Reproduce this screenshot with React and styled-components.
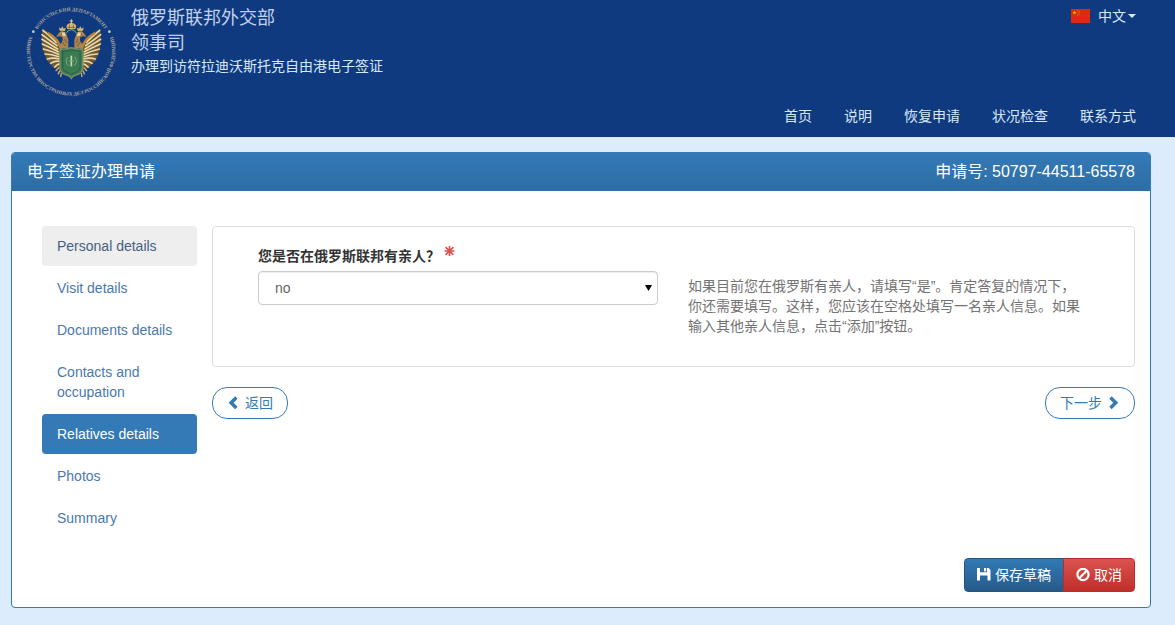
import React from "react";
import styled, { createGlobalStyle, css } from "styled-components";

const GlobalStyle = createGlobalStyle`
  *, *::before, *::after { box-sizing: border-box; }
  body {
    margin: 0;
    background: #dcecfd;
    color: #333;
    font-family: "Liberation Sans", "Noto Sans CJK SC", sans-serif;
    font-size: 14px;
    line-height: 20px;
  }
  button, select { font: inherit; }
`;

/* ---------- header ---------- */

const Header = styled.header`
  display: flex;
  justify-content: space-between;
  min-height: 137px;
  padding: 5px 39px 10px 25px;
  background: #103a7f;
  color: #d8e8fb;
`;

const Brand = styled.div`
  display: flex;
  align-items: flex-start;
  gap: 14px;
`;

const BrandText = styled.div`
  display: flex;
  flex-direction: column;
  padding-top: 1px;
`;

const BrandLine = styled.span`
  font-size: 18px;
  line-height: 25px;
  color: #c0d2ee;
`;

const BrandNote = styled.span`
  line-height: 20px;
`;

const HeaderSide = styled.div`
  display: flex;
  flex-direction: column;
  justify-content: space-between;
  align-items: flex-end;
`;

const LanguageButton = styled.button`
  display: flex;
  align-items: center;
  gap: 2px;
  padding: 0;
  border: 0;
  background: none;
  color: inherit;
  line-height: 22px;
  cursor: pointer;
`;

const FlagIcon = styled.svg`
  margin-right: 6px;
`;

const MainNav = styled.nav`
  display: flex;
  gap: 32px;
`;

const MainLink = styled.a`
  color: inherit;
  line-height: 22px;
  text-decoration: none;
`;

/* ---------- panel ---------- */

const Page = styled.main`
  padding: 15px 24px 17px 11px;
`;

const Panel = styled.section`
  border: 1px solid #337ab7;
  border-radius: 4px;
  background: #fff;
  overflow: hidden;
`;

const PanelHeading = styled.div`
  display: flex;
  justify-content: space-between;
  padding: 9px 15px;
  background: linear-gradient(#337ab7, #2e6da4);
  color: #fff;
  font-size: 16px;
`;

const PanelTitle = styled.h1`
  margin: 0;
  font: inherit;
`;

const PanelBody = styled.div`
  display: flex;
  align-items: flex-start;
  gap: 15px;
  padding: 35px 15px 20px 30px;
`;

const PanelFooter = styled.div`
  display: flex;
  justify-content: flex-end;
  padding: 0 15px 15px;
`;

const Steps = styled.nav`
  display: flex;
  flex: none;
  flex-direction: column;
  gap: 2px;
  width: 155px;
`;

const StepLink = styled.a`
  padding: 10px 15px;
  border-radius: 4px;
  color: #4a78ae;
  text-decoration: none;
  ${(p) => p.$state === "hover" && css`background: #eee; color: #475f80;`}
  ${(p) => p.$state === "active" && css`background: #337ab7; color: #fff;`}
`;

const Content = styled.div`
  flex: 1;
  min-width: 0;
`;

const Question = styled.div`
  display: grid;
  grid-template-columns: 1fr 1fr;
  gap: 30px;
  padding: 19px 46px 30px 45px;
  border: 1px solid #ddd;
  border-radius: 4px;
`;

const FieldLabel = styled.label`
  display: flex;
  gap: 4px;
  margin-bottom: 5px;
  font-weight: 700;
`;

const SelectBox = styled.div`
  position: relative;
`;

const Select = styled.select`
  display: block;
  width: 100%;
  height: 34px;
  padding: 0 16px;
  border: 1px solid #ccc;
  border-radius: 4px;
  background: #fff;
  box-shadow: inset 0 1px 1px rgba(0, 0, 0, 0.075);
  color: #666;
  appearance: none;
`;

const SelectArrow = styled.svg`
  position: absolute;
  top: 14px;
  right: 6px;
  pointer-events: none;
`;

const Help = styled.p`
  margin: 0;
  padding-top: 30px;
  color: #737373;
`;

const Pager = styled.div`
  display: flex;
  justify-content: space-between;
  margin-top: 20px;
`;

const Button = styled.button`
  display: flex;
  align-items: center;
  gap: 4px;
  border: 1px solid;
  cursor: pointer;
`;

const PagerButton = styled(Button)`
  height: 32px;
  padding: 0 14px;
  border-color: #337ab7;
  border-radius: 15px;
  background: #fff;
  color: #337ab7;
`;

const ActionButton = styled(Button)`
  height: 34px;
  padding: 0 12px;
  color: #fff;
  ${(p) =>
    p.$kind === "danger"
      ? css`
          margin-left: -1px;
          border-color: #b92c28;
          border-radius: 0 4px 4px 0;
          background: linear-gradient(#d9534f, #c12e2a);
        `
      : css`
          border-color: #245580;
          border-radius: 4px 0 0 4px;
          background: linear-gradient(#337ab7, #265a88);
        `}
`;

/* ---------- drawings ---------- */

const Icon = ({ children, size = 14 }) => (
  <svg width={size} height={size} viewBox="0 0 14 14" fill="currentColor" aria-hidden="true">
    {children}
  </svg>
);

const ChevronLeft = () => (
  <Icon><path d="M8.1 .3 10.600 2.800 6.600 6.800l4 4-2.500 2.500L1.600 6.800z" /></Icon>
);
const ChevronRight = () => (
  <Icon><path d="M5.700 .3 3.200 2.800 7.200 6.800l-4 4 2.500 2.500L12.200 6.800z" /></Icon>
);
const Floppy = () => (
  <Icon>
    <path d="M0 0h3v4.200h7V0h1.500L13.500 2V12.500h-3V7.500H3v5H0z" />
    <path d="M7 0h2.200v3.400H7z" />
  </Icon>
);
const Ban = () => (
  <Icon>
    <circle cx="7" cy="6.500" r="5.600" fill="none" stroke="currentColor" strokeWidth="2.200" />
    <path d="M3.200 10.300 10.800 2.700" stroke="currentColor" strokeWidth="2.200" />
  </Icon>
);
const Required = () => (
  <svg width="11" height="11" viewBox="-5.500 -5 11 11" stroke="#d9534f" strokeWidth="1.700" role="img" aria-label="required">
    <path d="M0-5V5M-5 0H5M-3.900-3.900 3.900 3.900M3.900-3.900-3.900 3.900" />
  </svg>
);

const Flag = () => (
  <FlagIcon width="19" height="14" viewBox="0 0 19 14" aria-hidden="true">
    <path fill="#de2910" d="M0 0h19v14H0z" />
    <path fill="#ffb400" d="m3.500 1.500.6 1.500h1.600L4.400 4l.5 1.600-1.400-1-1.400 1L2.600 4 1.300 3h1.600z" />
    <g fill="#f0891a">
      <circle cx="6.800" cy="1.500" r=".6" />
      <circle cx="8.200" cy="2.900" r=".6" />
      <circle cx="8.200" cy="4.800" r=".6" />
      <circle cx="6.800" cy="6.200" r=".6" />
    </g>
  </FlagIcon>
);

const EagleHalf = () => (
  <g>
    <path fill="#6d5836" d="M82 86 80 118 84 150 96 180 118 204 136 206 142 140 128 116 106 98z" />
    <g stroke="#ecd9a8" strokeWidth="5" strokeLinecap="round" fill="none">
      <path d="M84 90Q104 106 124 126" />
      <path d="M81 103Q100 118 126 136" />
      <path d="M81 117Q102 130 128 146" />
      <path d="M82 131Q104 141 130 154" />
      <path d="M85 146Q106 151 131 162" />
      <path d="M90 161Q110 161 132 169" />
      <path d="M97 176Q114 171 133 176" />
      <path d="M107 189Q119 181 134 183" />
      <path d="M119 200Q126 192 136 190" />
    </g>
    <path fill="none" stroke="#b3863c" strokeWidth="7" d="M98 98Q130 114 138 146" />
    <path fill="#a98350" d="M160 144V118Q156 108 154 100 148 91 138 93 130 97 123 110L132 108 141 109Q147 120 137 130L135 144z" />
    <path fill="#f1d695" d="M135 98 149 96 152 108 143 106z" />
    <path fill="#d8b674" d="m134 91-2-10 6 4 4-7 4 7 6-3-2 10z" />
    <circle cx="139" cy="101" r="2" fill="#2b2b30" />
    <path fill="none" stroke="#5c4a30" strokeWidth="2" d="M149 116 155 128M143 126 151 138" />
    <path fill="none" stroke="#d9b36c" strokeWidth="4" d="M132 202 122 212M135 210 129 222M139 218 137 230" />
  </g>
);

const Emblem = () => (
  <svg width="92" height="92" viewBox="30 14 276 276" role="img" aria-label="Консульский департамент">
    <defs>
      <path id="ring-top" d="M48 152A120 120 0 0 1 288 152" />
      <path id="ring-bottom" d="M42 110A133 133 0 1 0 294 110" />
    </defs>
    <g fill="#a9a6a0" fontFamily="Liberation Serif, serif" fontWeight="700" fontSize="15">
      <text textAnchor="middle">
        <textPath href="#ring-top" startOffset="50%">КОНСУЛЬСКИЙ ДЕПАРТАМЕНТ</textPath>
      </text>
      <text textAnchor="middle">
        <textPath href="#ring-bottom" startOffset="50%">МИНИСТЕРСТВА ИНОСТРАННЫХ ДЕЛ РОССИЙСКОЙ ФЕДЕРАЦИИ</textPath>
      </text>
    </g>
    <circle cx="55" cy="94" r="4" fill="#d5ccb4" />
    <circle cx="283" cy="94" r="4" fill="#d5ccb4" />
    <EagleHalf />
    <g transform="translate(338 0) scale(-1 1)"><EagleHalf /></g>
    <path fill="#d9b775" d="M157 86q-6-10 2-15 10-6 20 0 8 5 2 15z" />
    <path stroke="#e8d3a1" strokeWidth="3" d="M169 71V57M164 62h10" />
    <path fill="none" stroke="#6c5534" strokeWidth="2" d="M163 84V73M175 84V73M157 81h24" />
    <path fill="none" stroke="#8fa6bf" strokeWidth="3" d="M154 98q4-9 15-10 11 1 15 10" />
    <path fill="#397c54" stroke="#7f8f66" strokeWidth="4" d="M137 146q16 2 32-4 16 6 32 4l3 10-1 48q-2 16-20 20-10 2-14 10-4-8-14-10-18-4-20-20l-1-48z" />
    <path fill="none" stroke="#244f3e" strokeWidth="2" d="M143 152q14 1 26-3 12 4 26 3v50q-2 12-16 15-7 2-10 7-3-5-10-7-14-3-16-15z" />
    <path stroke="#c9d8ad" strokeWidth="5" d="M169 166V198" />
    <path fill="none" stroke="#88ab7a" strokeWidth="3" d="M159 170q-12 14 2 26M179 170q12 14-2 26M161 182h16" />
  </svg>
);

/* ---------- page ---------- */

const links = ["首页", "说明", "恢复申请", "状况检查", "联系方式"];

const steps = [
  { name: "Personal details", state: "hover" },
  { name: "Visit details" },
  { name: "Documents details" },
  { name: "Contacts and occupation" },
  { name: "Relatives details", state: "active" },
  { name: "Photos" },
  { name: "Summary" },
];

export default function App() {
  return (
    <>
      <GlobalStyle />
      <Header lang="zh-CN">
        <Brand>
          <Emblem />
          <BrandText>
            <BrandLine>俄罗斯联邦外交部</BrandLine>
            <BrandLine>领事司</BrandLine>
            <BrandNote>办理到访符拉迪沃斯托克自由港电子签证</BrandNote>
          </BrandText>
        </Brand>
        <HeaderSide>
          <LanguageButton type="button">
            <Flag />
            中文
            <svg width="8" height="4" viewBox="0 0 8 4" fill="currentColor" aria-hidden="true">
              <path d="M0 0h8L4 4z" />
            </svg>
          </LanguageButton>
          <MainNav>
            {links.map((name) => (
              <MainLink href="#" key={name}>{name}</MainLink>
            ))}
          </MainNav>
        </HeaderSide>
      </Header>
      <Page lang="zh-CN">
        <Panel>
          <PanelHeading>
            <PanelTitle>电子签证办理申请</PanelTitle>
            <span>申请号: 50797-44511-65578</span>
          </PanelHeading>
          <PanelBody>
            <Steps lang="en">
              {steps.map((step) => (
                <StepLink href="#" key={step.name} $state={step.state}>{step.name}</StepLink>
              ))}
            </Steps>
            <Content>
              <Question>
                <div>
                  <FieldLabel htmlFor="relatives">
                    您是否在俄罗斯联邦有亲人？
                    <Required />
                  </FieldLabel>
                  <SelectBox>
                    <Select id="relatives" defaultValue="no">
                      <option value="no">no</option>
                      <option value="yes">yes</option>
                    </Select>
                    <SelectArrow width="7" height="6" viewBox="0 0 7 6" aria-hidden="true">
                      <path d="M0 0h7L3.500 6z" />
                    </SelectArrow>
                  </SelectBox>
                </div>
                <Help>
                  如果目前您在俄罗斯有亲人，请填写“是”。肯定答复的情况下，你还需要填写。这样，您应该在空格处填写一名亲人信息。如果输入其他亲人信息，点击“添加”按钮。
                </Help>
              </Question>
              <Pager>
                <PagerButton type="button"><ChevronLeft />返回</PagerButton>
                <PagerButton type="button">下一步<ChevronRight /></PagerButton>
              </Pager>
            </Content>
          </PanelBody>
          <PanelFooter>
            <ActionButton type="button"><Floppy />保存草稿</ActionButton>
            <ActionButton type="button" $kind="danger"><Ban />取消</ActionButton>
          </PanelFooter>
        </Panel>
      </Page>
    </>
  );
}
